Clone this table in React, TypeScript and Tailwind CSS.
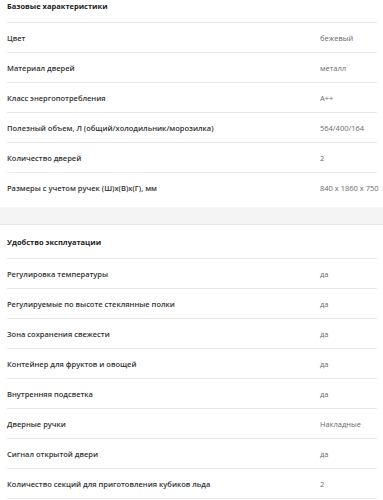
const basic = [
  ['Цвет', 'бежевый'],
  ['Материал дверей', 'металл'],
  ['Класс энергопотребления', 'A++'],
  ['Полезный объем, Л (общий/холодильник/морозилка)', '564/400/164'],
  ['Количество дверей', '2'],
  ['Размеры с учетом ручек (Ш)x(В)x(Г), мм', '840 x 1860 x 750'],
]

const comfort = [
  ['Регулировка температуры', 'да'],
  ['Регулируемые по высоте стеклянные полки', 'да'],
  ['Зона сохранения свежести', 'да'],
  ['Контейнер для фруктов и овощей', 'да'],
  ['Внутренняя подсветка', 'да'],
  ['Дверные ручки', 'Накладные'],
  ['Сигнал открытой двери', 'да'],
  ['Количество секций для приготовления кубиков льда', '2'],
]

function Row({ label, value, last }: { label: string; value: string; last?: boolean }) {
  return (
    <div
      className={
        'grid h-[30px] grid-cols-[313px_1fr] items-center ' +
        (last ? '' : 'border-b border-[#e8e8e8]')
      }
    >
      <div className="font-semibold text-[#333333]">{label}</div>
      <div className="whitespace-nowrap text-[#6b6b6b]">{value}</div>
    </div>
  )
}

export default function App() {
  return (
    <div
      className="h-[500px] overflow-hidden bg-white text-[7.5px] leading-[12px]"
      style={{ fontFamily: '"Open Sans", "Noto Sans", sans-serif' }}
    >
      <div className="pl-[7px] pr-[6px]">
        <div className="border-b border-[#e8e8e8] pb-[10px] font-bold text-[#222222]">
          Базовые характеристики
        </div>
        {basic.map(([l, v], i) => (
          <Row key={l} label={l} value={v} last={i === basic.length - 1} />
        ))}
      </div>

      <div className="mt-[4px] h-[18px] border-b border-[#e6e6e6] bg-[#f4f4f4]" />

      <div className="pl-[7px] pr-[6px]">
        <div className="flex h-[34px] items-center border-b border-[#e8e8e8] font-bold text-[#222222]">
          Удобство эксплуатации
        </div>
        {comfort.map(([l, v]) => (
          <Row key={l} label={l} value={v} />
        ))}
      </div>
    </div>
  )
}
